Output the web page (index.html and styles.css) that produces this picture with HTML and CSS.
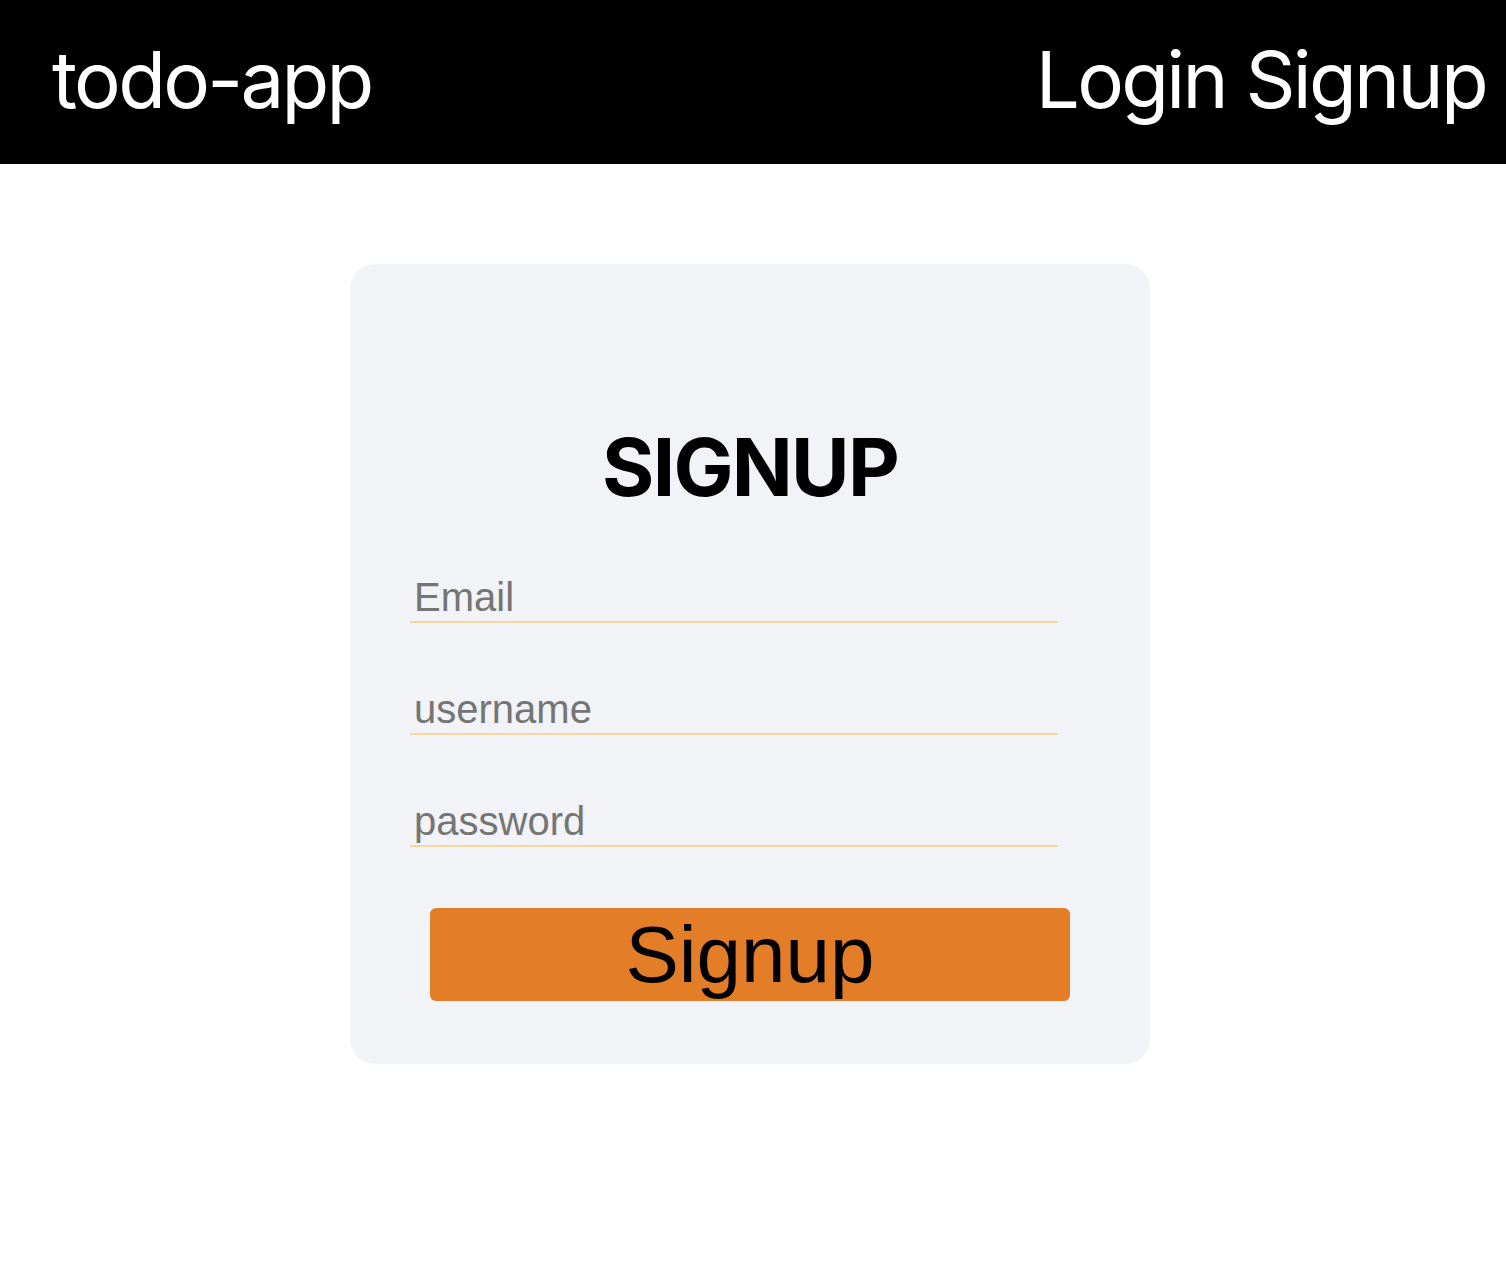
FILE: index.html
```html
<!DOCTYPE html>
<html lang="en">
<head>
<meta charset="utf-8">
<title>todo-app</title>
<link rel="stylesheet" href="styles.css">
</head>
<body>
<header class="nav">
  <div class="brand">todo-app</div>
  <nav class="links">
    <a class="link" href="#">Login</a>
    <a class="link" href="#">Signup</a>
  </nav>
</header>
<main class="main">
  <form class="card">
    <h1 class="title">SIGNUP</h1>
    <div class="fields">
      <input class="field" type="email" placeholder="Email">
      <input class="field" type="text" placeholder="username">
      <input class="field" type="password" placeholder="password">
    </div>
    <button class="submit" type="button">Signup</button>
  </form>
</main>
</body>
</html>
```

FILE: styles.css
```css
* { box-sizing: border-box; }
html, body { margin: 0; padding: 0; background: #ffffff; }
body { font-family: "Liberation Sans", Arial, sans-serif; }

.nav {
  height: 164px;
  background: #000000;
  color: #ffffff;
  display: flex;
  align-items: center;
  justify-content: space-between;
  padding: 0 20px 5px 52px;
  font-family: Inter, "Noto Sans", sans-serif;
  font-size: 78px;
  font-weight: 400;
  letter-spacing: -2.7px;
}
.brand { line-height: 1; }
.links { display: flex; gap: 0.25em; line-height: 1; }
.link { color: #ffffff; text-decoration: none; }

.main { display: flex; justify-content: center; padding: 100px 6px 0 0; }

.card {
  width: 800px;
  height: 800px;
  background: #f2f3f7;
  border-radius: 25px;
  padding: 163px 60px 0 60px;
  display: flex;
  flex-direction: column;
}
.title {
  margin: 0;
  text-align: center;
  font-family: Inter, "Noto Sans", sans-serif;
  font-weight: 700;
  font-size: 80px;
  line-height: 80px;
  letter-spacing: -1.7px;
}
.fields {
  display: flex;
  flex-direction: column;
  gap: 63px;
  margin-top: 67px;
}
.field {
  width: 648px;
  border: none;
  border-bottom: 2px solid #f5d7a1;
  background: transparent;
  padding: 1px 4px;
  font-family: "Liberation Sans", Arial, sans-serif;
  font-size: 40px;
  outline: none;
}
.field::placeholder { color: #757575; }
.submit {
  align-self: center;
  margin: 61px 0 0 0;
  width: 640px;
  height: 93px;
  border: none;
  border-radius: 6px;
  background: #e37d27;
  color: #000000;
  font-family: "Liberation Sans", Arial, sans-serif;
  font-size: 80px;
  line-height: 1;
  padding: 0;
}
```
